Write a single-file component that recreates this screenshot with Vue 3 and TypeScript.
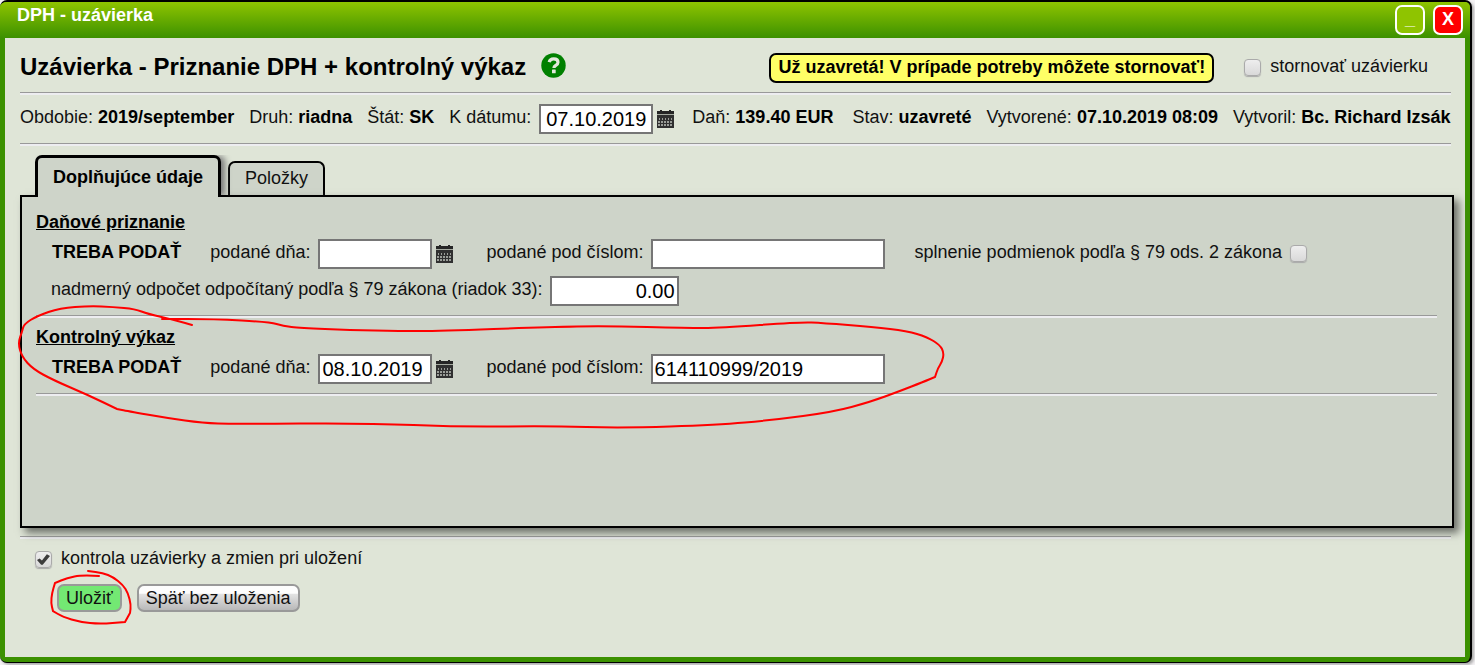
<script setup lang="ts">
import { ref } from 'vue'

type Point = [number, number]

const reverseClosing = ref(false)
const closingDate = ref('07.10.2019')
const taxDate = ref('')
const taxNumber = ref('')
const conditionsMet = ref(false)
const excessDeduction = ref('0.00')
const reportDate = ref('08.10.2019')
const reportNumber = ref('614110999/2019')
const checkOnSave = ref(true)
const activeTab = ref('details')

const sectionStroke: Point[] = [
  [192, 325], [175, 320], [148, 314], [135, 309], [113, 307], [90, 306], [60, 308], [37, 316], [24, 324],
  [22, 332], [18, 343], [22, 357], [33, 369], [53, 380], [88, 395], [117, 409], [117, 409], [127, 411], [167, 418],
  [203, 423], [233, 424], [367, 423], [460, 427], [550, 426], [623, 428], [717, 425], [773, 420], [833, 412],
  [870, 402], [900, 391], [923, 382], [935, 377], [935, 377], [938, 368], [942, 362], [944, 353], [940, 345], [927, 337],
  [907, 331], [873, 327], [823, 323], [800, 322], [720, 328], [687, 328], [607, 326], [547, 327], [440, 331],
  [400, 331], [350, 330], [300, 328], [283, 326], [270, 322], [213, 319], [162, 319],
]

const buttonStroke: Point[] = [
  [99, 576], [82, 575], [67, 578], [55, 583], [55, 583], [52, 593], [51, 603], [53, 611], [53, 611], [63, 617], [80, 622],
  [100, 624], [125, 622], [125, 622], [130, 613], [130, 613], [131, 605], [128, 593], [123, 585], [113, 577], [103, 573], [88, 571],
]

// Smooths a freehand stroke by curving through the midpoints of its samples;
// a repeated sample keeps a sharp corner.
function strokePath(points: Point[]): string {
  let d = `M${points[0][0]} ${points[0][1]}`
  for (let i = 1; i < points.length - 1; i++) {
    const [x, y] = points[i]
    const [nx, ny] = points[i + 1]
    d += ` Q${x} ${y} ${(x + nx) / 2} ${(y + ny) / 2}`
  }
  const last = points[points.length - 1]
  return `${d} L${last[0]} ${last[1]}`
}

const strokes = [strokePath(sectionStroke), strokePath(buttonStroke)]
</script>

<template>
  <div class="stage">
    <svg class="defs" width="0" height="0" aria-hidden="true">
      <symbol id="calendar" viewBox="0 0 17 18">
        <path d="M0 1h3V0h2v1h7V0h2v1h3v3H0z" fill="#252525" />
        <path d="M0 4h17v1H0z" fill="#a5aaa0" />
        <path d="M0 5h17v13H0z" fill="#303030" />
        <g fill="#9a9d98">
          <path d="M2 8h1v2H2zM5 8h1v2H5zM8 8h1v2H8zM11 8h1v2h-1zM14 8h1v2h-1z" />
          <path d="M1 11h2v2H1zM4 11h2v2H4zM7 11h2v2H7zM10 11h2v2h-2zM13 11h2v2h-2z" />
          <path d="M1 14h2v2H1zM4 14h2v2H4zM7 14h2v2H7zM10 14h2v2h-2zM13 14h2v2h-2z" />
        </g>
      </symbol>
    </svg>

    <div class="window">
      <header class="titlebar">
        <span class="caption">DPH - uzávierka</span>
        <button type="button" class="win-btn minimize" title="Minimalizovať">_</button>
        <button type="button" class="win-btn close" title="Zavrieť">X</button>
      </header>

      <main class="content">
        <div class="heading">
          <h1>Uzávierka - Priznanie DPH + kontrolný výkaz</h1>
          <button type="button" class="help" aria-label="Pomocník">
            <svg width="25" height="25" viewBox="0 0 25 25" aria-hidden="true">
              <circle cx="12.5" cy="12.5" r="12.2" fill="#008000" />
              <path d="M8.2 9.2C8.7 6.9 10.4 5.9 12.7 5.9c2.6 0 4.3 1.2 4.3 3.3 0 1.5-.8 2.3-2.2 3.2-1.3.8-1.9 1.3-1.9 2.5" fill="none" stroke="#e3e8dc" stroke-width="3.2" />
              <rect x="11" y="16.6" width="3.7" height="3.6" rx=".5" fill="#e3e8dc" />
            </svg>
          </button>
          <strong class="alert">Už uzavretá! V prípade potreby môžete stornovať!</strong>
          <label class="check"><input v-model="reverseClosing" type="checkbox" />stornovať uzávierku</label>
        </div>

        <hr />

        <div class="info">
          <span>Obdobie: <b>2019/september</b></span>
          <span>Druh: <b>riadna</b></span>
          <span>Štát: <b>SK</b></span>
          <span class="field">
            <label for="closing-date">K dátumu:</label>
            <input id="closing-date" v-model="closingDate" class="box date centered" type="text" />
            <button type="button" class="cal" aria-label="Kalendár"><svg width="17" height="18"><use href="#calendar" /></svg></button>
          </span>
          <span class="amounts">Daň: <b>139.40 EUR</b></span>
          <span>Stav: <b>uzavreté</b></span>
          <span>Vytvorené: <b>07.10.2019 08:09</b></span>
          <span>Vytvoril: <b>Bc. Richard Izsák</b></span>
        </div>

        <hr />

        <div class="tabs" role="tablist">
          <button type="button" role="tab" class="tab" :class="{ active: activeTab === 'details' }" @click="activeTab = 'details'">Doplňujúce údaje</button>
          <button type="button" role="tab" class="tab" :class="{ active: activeTab === 'items' }" @click="activeTab = 'items'">Položky</button>
        </div>

        <div class="panel" role="tabpanel">
          <section>
            <h2>Daňové priznanie</h2>
            <div class="row">
              <b class="state">TREBA PODAŤ</b>
              <span class="field">
                <label for="tax-date">podané dňa:</label>
                <input id="tax-date" v-model="taxDate" class="box date" type="text" />
                <button type="button" class="cal" aria-label="Kalendár"><svg width="17" height="18"><use href="#calendar" /></svg></button>
              </span>
              <span class="field">
                <label for="tax-number">podané pod číslom:</label>
                <input id="tax-number" v-model="taxNumber" class="box number" type="text" />
              </span>
              <label class="check trailing">splnenie podmienok podľa § 79 ods. 2 zákona<input v-model="conditionsMet" type="checkbox" /></label>
            </div>
            <div class="row">
              <span class="field">
                <label for="deduction">nadmerný odpočet odpočítaný podľa § 79 zákona (riadok 33):</label>
                <input id="deduction" v-model="excessDeduction" class="box amount" type="text" />
              </span>
            </div>
          </section>
          <hr />
          <section>
            <h2>Kontrolný výkaz</h2>
            <div class="row">
              <b class="state">TREBA PODAŤ</b>
              <span class="field">
                <label for="report-date">podané dňa:</label>
                <input id="report-date" v-model="reportDate" class="box date" type="text" />
                <button type="button" class="cal" aria-label="Kalendár"><svg width="17" height="18"><use href="#calendar" /></svg></button>
              </span>
              <span class="field">
                <label for="report-number">podané pod číslom:</label>
                <input id="report-number" v-model="reportNumber" class="box number" type="text" />
              </span>
            </div>
          </section>
          <hr />
        </div>

        <hr />

        <div class="footer">
          <label class="check"><input v-model="checkOnSave" type="checkbox" />kontrola uzávierky a zmien pri uložení</label>
          <div class="actions">
            <button type="button" class="btn save">Uložiť</button>
            <button type="button" class="btn">Späť bez uloženia</button>
          </div>
        </div>
      </main>
    </div>

    <svg class="marks" width="960" height="640" aria-hidden="true">
      <path v-for="(d, i) in strokes" :key="i" :d="d" />
    </svg>
  </div>
</template>

<style>
body {
  background: #f4f2f4;
}
</style>

<style scoped>
* {
  box-sizing: border-box;
}

.stage {
  position: relative;
  overflow: hidden;
  min-height: 100vh;
  font: 18px/26px "Liberation Sans", Arial, sans-serif;
  color: #111;
}

.defs {
  display: block;
}

.window {
  display: flex;
  flex-direction: column;
  min-height: calc(100vh - 2px);
  margin: 0 3px 2px 0;
  border: 2px solid #000;
  border-width: 2px 2px 1px 0;
  border-radius: 7px;
  background: #3c9100;
  box-shadow: 2px 2px 3px #aaa;
  overflow: hidden;
}

.titlebar {
  display: flex;
  align-items: flex-start;
  gap: 8px;
  height: 36px;
  padding: 3px 7px 0 17px;
  background: linear-gradient(#8fc400, #3c9100);
}

.caption {
  flex: 1;
  line-height: 20px;
  font-weight: bold;
  color: #fff;
}

button {
  font: inherit;
  color: inherit;
  cursor: pointer;
}

.win-btn {
  width: 30px;
  height: 30px;
  padding: 0 0 2px;
  border: 2px solid #fff;
  border-radius: 7px;
  font-weight: bold;
  line-height: 24px;
  color: #fff;
}

.minimize {
  padding-bottom: 4px;
  background: #8fc400;
}

.close {
  background: #f00;
}

.content {
  flex: 1;
  margin: 0 5px 5px;
  padding: 0 14px 0 15px;
  background: #dfe5d7;
}

hr {
  height: 3px;
  margin: 0;
  border: 0;
  border-top: 1px solid #999;
  background: #ededf0;
}

.heading {
  display: flex;
  align-items: center;
  height: 54px;
  padding: 2px 23px 0 0;
}

h1 {
  margin: 0;
  padding-top: 2px;
  font-size: 24px;
  line-height: 30px;
  color: #000;
}

.help {
  display: flex;
  margin-left: 15px;
  padding: 0 0 2px;
  border: 0;
  background: none;
}

.alert {
  height: 30px;
  margin: 4px 30px 0 auto;
  padding: 0 7px;
  border: 2px solid #000;
  border-radius: 7px;
  background: #ff6;
  line-height: 24px;
  color: #000;
}

.check {
  display: flex;
  align-items: center;
  gap: 9px;
}

.check input {
  position: relative;
  appearance: none;
  width: 17px;
  height: 17px;
  margin: 3px 0 0;
  border: 1px solid #aaa;
  border-radius: 4px;
  background: linear-gradient(#eee, #d9d9d9);
  box-shadow: 0 1px 1px #aaa;
}

.check input:checked::after {
  content: "";
  position: absolute;
  inset: 2px 1px;
  background: #3c3c3c;
  clip-path: polygon(0 54%, 20% 42%, 38% 60%, 76% 2%, 100% 18%, 44% 98%, 32% 98%);
}

.info {
  display: flex;
  gap: 15px;
  height: 48px;
  padding-top: 9px;
  white-space: nowrap;
}

.amounts {
  margin: 0 4px 0 3px;
}

b {
  color: #000;
}

.field {
  display: flex;
  align-items: flex-start;
}

.box {
  height: 30px;
  margin-left: 7px;
  padding: 0 2px;
  border: 2px solid #767676;
  border-radius: 0;
  background: #fff;
  font: 20px "Liberation Sans", Arial, sans-serif;
  color: #000;
}

.date {
  width: 114px;
  margin-left: 8px;
}

.centered {
  text-align: center;
}

.number {
  width: 234px;
}

.amount {
  width: 129px;
  text-align: right;
}

.cal {
  display: flex;
  margin: 6px 0 0 4px;
  padding: 0;
  border: 0;
  background: none;
}

.tabs {
  display: flex;
  align-items: flex-end;
  gap: 7px;
  padding: 9px 15px 0;
}

.tab {
  height: 34px;
  padding: 0 15px 2px;
  border: 2px solid #000;
  border-bottom: 0;
  border-radius: 7px 7px 0 0;
  background: #ced4c9;
}

.tab.active {
  position: relative;
  z-index: 1;
  height: 42px;
  margin-bottom: -2px;
  border-width: 3px 3px 0;
  font-weight: bold;
  color: #000;
  box-shadow: 5px 0 6px -1px #777;
  clip-path: inset(0 -14px 0 0);
}

.tab.active::after {
  content: "";
  position: absolute;
  right: -20px;
  bottom: 0;
  width: 17px;
  height: 2px;
  background: #000;
}

.panel {
  position: relative;
  min-height: 333px;
  margin: 0 -3px 8px 0;
  padding: 6px 15px 0 14px;
  border: 2px solid #000;
  background: #ced4c9;
  box-shadow: 5px 5px 8px #6b6f68;
}

section {
  padding-bottom: 9px;
}

h2 {
  height: 36px;
  margin: 0;
  font-size: 18px;
  line-height: 38px;
  text-decoration: underline;
  color: #000;
}

.row {
  display: flex;
  padding-left: 15px;
}

.row + .row {
  margin-top: 7px;
}

.row .field + .field {
  margin-left: 33px;
}

.state {
  margin: 0 29px 0 1px;
}

.trailing {
  gap: 8px;
  height: 26px;
  margin-left: 30px;
}

.footer {
  padding: 6px 15px 0;
}

.actions {
  display: flex;
  gap: 15px;
  padding: 13px 22px;
}

.btn {
  height: 28px;
  padding: 0 7px;
  border: 2px solid #999;
  border-radius: 7px;
  background: linear-gradient(#fdfdfd 30%, #e2e2e2 35%, #b8b8b8);
  line-height: 24px;
}

.save {
  background: #73e873;
}

.marks {
  position: absolute;
  top: 0;
  left: 0;
  z-index: 2;
  fill: none;
  stroke: #f00;
  stroke-width: 2;
  stroke-linecap: round;
  pointer-events: none;
}
</style>
